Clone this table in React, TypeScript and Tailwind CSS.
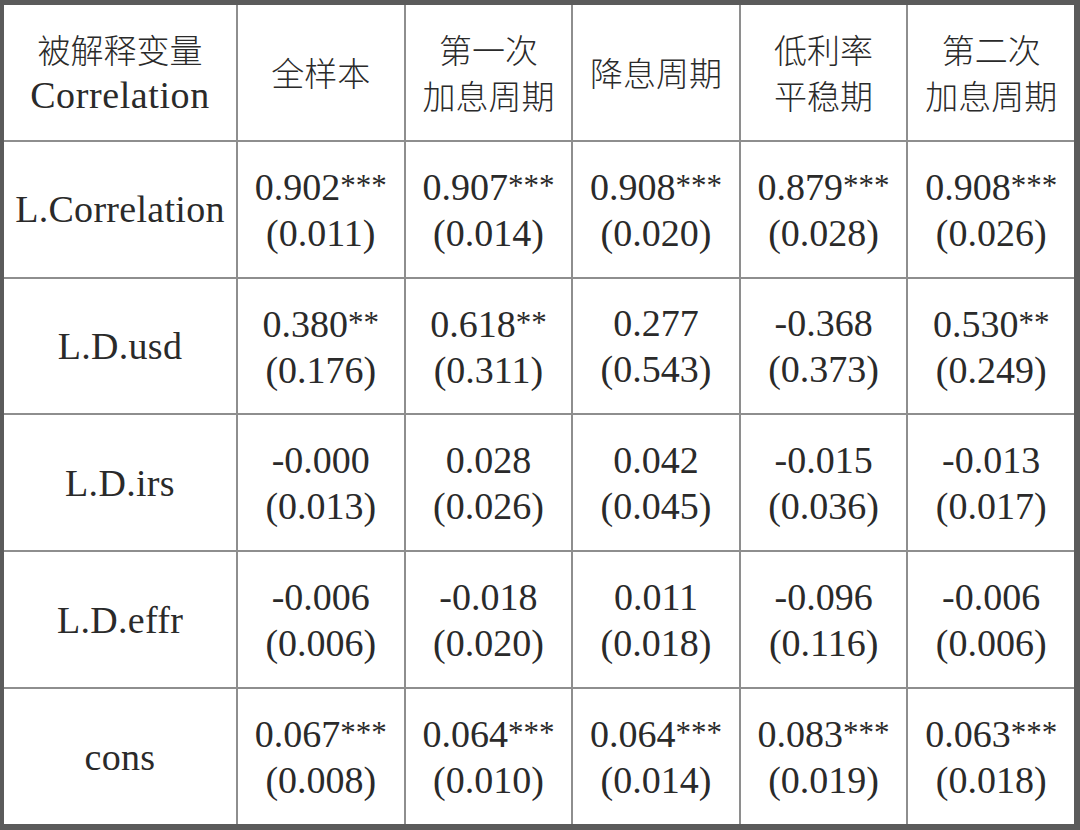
import React from "react";

const headers: string[][] = [
  ["全样本"],
  ["第一次", "加息周期"],
  ["降息周期"],
  ["低利率", "平稳期"],
  ["第二次", "加息周期"],
];

const rows: { name: string; cells: [string, string][] }[] = [
  {
    name: "L.Correlation",
    cells: [
      ["0.902***", "(0.011)"],
      ["0.907***", "(0.014)"],
      ["0.908***", "(0.020)"],
      ["0.879***", "(0.028)"],
      ["0.908***", "(0.026)"],
    ],
  },
  {
    name: "L.D.usd",
    cells: [
      ["0.380**", "(0.176)"],
      ["0.618**", "(0.311)"],
      ["0.277", "(0.543)"],
      ["-0.368", "(0.373)"],
      ["0.530**", "(0.249)"],
    ],
  },
  {
    name: "L.D.irs",
    cells: [
      ["-0.000", "(0.013)"],
      ["0.028", "(0.026)"],
      ["0.042", "(0.045)"],
      ["-0.015", "(0.036)"],
      ["-0.013", "(0.017)"],
    ],
  },
  {
    name: "L.D.effr",
    cells: [
      ["-0.006", "(0.006)"],
      ["-0.018", "(0.020)"],
      ["0.011", "(0.018)"],
      ["-0.096", "(0.116)"],
      ["-0.006", "(0.006)"],
    ],
  },
  {
    name: "cons",
    cells: [
      ["0.067***", "(0.008)"],
      ["0.064***", "(0.010)"],
      ["0.064***", "(0.014)"],
      ["0.083***", "(0.019)"],
      ["0.063***", "(0.018)"],
    ],
  },
];

const serif = "font-['Liberation_Serif','Noto_Sans_CJK_SC',serif] text-[38px] leading-[46px]";
const cjk = "font-['Noto_Sans_CJK_SC',sans-serif] font-light text-[33px] leading-[46px]";
const cell = "bg-white flex flex-col items-center justify-center text-center text-[#2a2a2a]";

// 계수 뒤의 유의성 별표는 조금 작게
function Coef({ value }: { value: string }) {
  const num = value.replace(/\*+$/, "");
  const stars = value.slice(num.length);
  return (
    <span className={serif}>
      {num}
      {stars && <span className="text-[31px] align-[4px]">{stars}</span>}
    </span>
  );
}

export default function App() {
  return (
    <div className="w-[1080px] h-[830px] bg-[#5b5b5b] pt-[5px] pl-[4px] pr-[6px] pb-[6px]">
      <div className="grid h-[819px] grid-cols-[232px_repeat(5,1fr)] grid-rows-6 gap-[2px] bg-[#8e8e8e]">
        <div className={cell}>
          <span className={cjk}>被解释变量</span>
          <span className={`${serif} tracking-[0.6px]`}>Correlation</span>
        </div>
        {headers.map((lines, i) => (
          <div className={cell} key={i}>
            {lines.map((l) => (
              <span className={cjk} key={l}>
                {l}
              </span>
            ))}
          </div>
        ))}
        {rows.map((row) => (
          <React.Fragment key={row.name}>
            <div className={cell}>
              <span className={`${serif} tracking-[0.3px]`}>{row.name}</span>
            </div>
            {row.cells.map(([coef, se], i) => (
              <div className={cell} key={i}>
                <Coef value={coef} />
                <span className={serif}>{se}</span>
              </div>
            ))}
          </React.Fragment>
        ))}
      </div>
    </div>
  );
}
